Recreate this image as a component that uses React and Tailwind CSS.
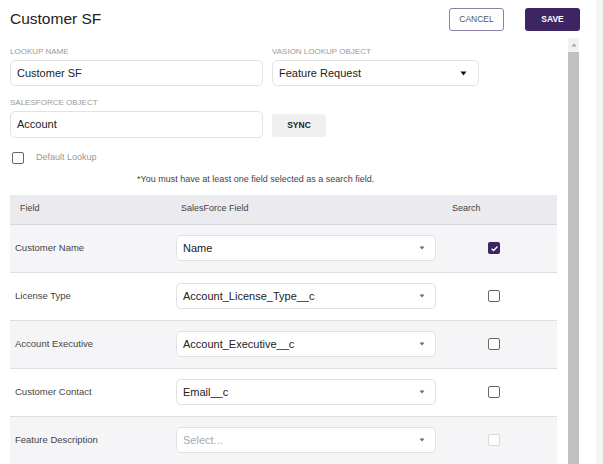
import React from 'react';

const ROWS = [
  { label: 'Customer Name', value: 'Name', checked: true },
  { label: 'License Type', value: 'Account_License_Type__c' },
  { label: 'Account Executive', value: 'Account_Executive__c' },
  { label: 'Customer Contact', value: 'Email__c' },
  { label: 'Feature Description', value: null, disabled: true },
];

function SmallCaret() {
  return (
    <svg width="6" height="4" viewBox="0 0 6 4" className="shrink-0">
      <path d="M0.5 0.5 L5.5 0.5 L3 3.5 Z" fill="#666" />
    </svg>
  );
}

function Checkbox({ checked, disabled }) {
  if (checked) {
    return (
      <span className="w-[12px] h-[12px] rounded-[2px] bg-[#3d2463] flex items-center justify-center">
        <svg width="9" height="9" viewBox="0 0 10 10">
          <path d="M1.8 5.2 L4 7.3 L8.3 2.8" stroke="#fff" strokeWidth="1.5" fill="none" />
        </svg>
      </span>
    );
  }
  return (
    <span
      className={`w-[12px] h-[12px] rounded-[2px] border-[1.5px] bg-white ${
        disabled ? 'border-[#d9d9d9]' : 'border-[#666]'
      }`}
    />
  );
}

function TableRow({ row, striped }) {
  return (
    <div
      className={`flex items-center h-[48px] border-b border-[#dedede] ${
        striped ? 'bg-[#f5f5f7]' : 'bg-white'
      }`}
    >
      <div className="w-[166px] pl-[5px] text-[9.5px] text-[#444]">{row.label}</div>
      <div className="w-[260px] h-[26px] bg-white border border-[#e2e2e2] rounded-[5px] flex items-center justify-between pl-[6px] pr-[10px]">
        <span className={`text-[11px] ${row.value ? 'text-[#222]' : 'text-[#aaa]'}`}>
          {row.value || 'Select...'}
        </span>
        <SmallCaret />
      </div>
      <div className="pl-[52px] flex items-center">
        <Checkbox checked={row.checked} disabled={row.disabled} />
      </div>
    </div>
  );
}

export default function App() {
  return (
    <div className="w-[603px] h-[464px] flex overflow-hidden bg-white font-['Liberation_Sans',Arial,sans-serif] text-[#333]">
      <div className="w-[580px] flex flex-col">

        {/* header with actions */}
        <header className="h-[38px] shrink-0 flex items-center justify-between pl-[10px]">
          <h1 className="text-[15.5px] text-[#222] leading-none">Customer SF</h1>
          <div className="flex items-center gap-[21px]">
            <button className="w-[55px] h-[23px] border border-[#8e7fa6] rounded-[3px] text-[8.5px] text-[#555] bg-white">
              CANCEL
            </button>
            <button className="w-[55px] h-[23px] rounded-[3px] text-[8.5px] font-bold text-white bg-[#3d2463]">
              SAVE
            </button>
          </div>
        </header>

        {/* scrolling body */}
        <div className="flex flex-1 min-h-0">
          <div className="w-[568px] pl-[10px] pr-[11px] pt-[9px]">

            <div className="flex gap-[9px]">
              <div className="flex flex-col gap-[3px]">
                <label className="text-[8px] leading-[10px] text-[#9a9a9a] uppercase">Lookup Name</label>
                <div className="w-[253px] h-[26px] border border-[#e2e2e2] rounded-[5px] flex items-center pl-[6px] text-[11px] text-[#222]">
                  Customer SF
                </div>
              </div>
              <div className="flex flex-col gap-[3px]">
                <label className="text-[8px] leading-[10px] text-[#9a9a9a] uppercase">Vasion Lookup Object</label>
                <div className="w-[207px] h-[26px] border border-[#e2e2e2] rounded-[5px] flex items-center justify-between pl-[6px] pr-[11px] text-[11px] text-[#222]">
                  <span>Feature Request</span>
                  <svg width="7" height="5" viewBox="0 0 7 5">
                    <path d="M0.5 0.5 L6.5 0.5 L3.5 4.5 Z" fill="#111" />
                  </svg>
                </div>
              </div>
            </div>

            <div className="flex flex-col gap-[3px] mt-[12px]">
              <label className="text-[8px] leading-[10px] text-[#9a9a9a] uppercase">Salesforce Object</label>
              <div className="flex items-center gap-[9px]">
                <div className="w-[253px] h-[27px] border border-[#e2e2e2] rounded-[5px] flex items-center pl-[6px] text-[11px] text-[#222]">
                  Account
                </div>
                <button className="w-[54px] h-[23px] rounded-[3px] bg-[#f0f0f2] text-[8.5px] font-bold text-[#222] mt-[1px]">
                  SYNC
                </button>
              </div>
            </div>

            <div className="flex items-center gap-[12px] mt-[13px] pl-[2px]">
              <Checkbox />
              <span className="text-[9px] text-[#999]">Default Lookup</span>
            </div>

            <p className="mt-[8px] pl-[127px] text-[9px] text-[#444] leading-[12px]">
              *You must have at least one field selected as a search field.
            </p>

            {/* field mapping table */}
            <div className="mt-[10px]">
              <div className="flex items-center h-[30px] bg-[#ebeaef] border-b border-[#d6d4dc] text-[9px] text-[#444]">
                <div className="w-[171px] pl-[10px]">Field</div>
                <div className="w-[271px]">SalesForce Field</div>
                <div>Search</div>
              </div>
              {ROWS.map((row, i) => (
                <TableRow key={row.label} row={row} striped={i % 2 === 0} />
              ))}
            </div>
          </div>

          {/* scrollbar */}
          <div className="w-[11px] bg-[#f1f1f1] flex flex-col items-center">
            <div className="h-[14px] flex items-center justify-center">
              <svg width="6" height="4" viewBox="0 0 6 4">
                <path d="M0.5 3.5 L5.5 3.5 L3 0.5 Z" fill="#a3a3a3" />
              </svg>
            </div>
            <div className="w-[11px] flex-1 bg-[#c1c1c1]" />
          </div>
        </div>
      </div>

      <div className="w-[16px] bg-white" />
      <div className="flex-1 bg-[#f4f4f5]" />
    </div>
  );
}
